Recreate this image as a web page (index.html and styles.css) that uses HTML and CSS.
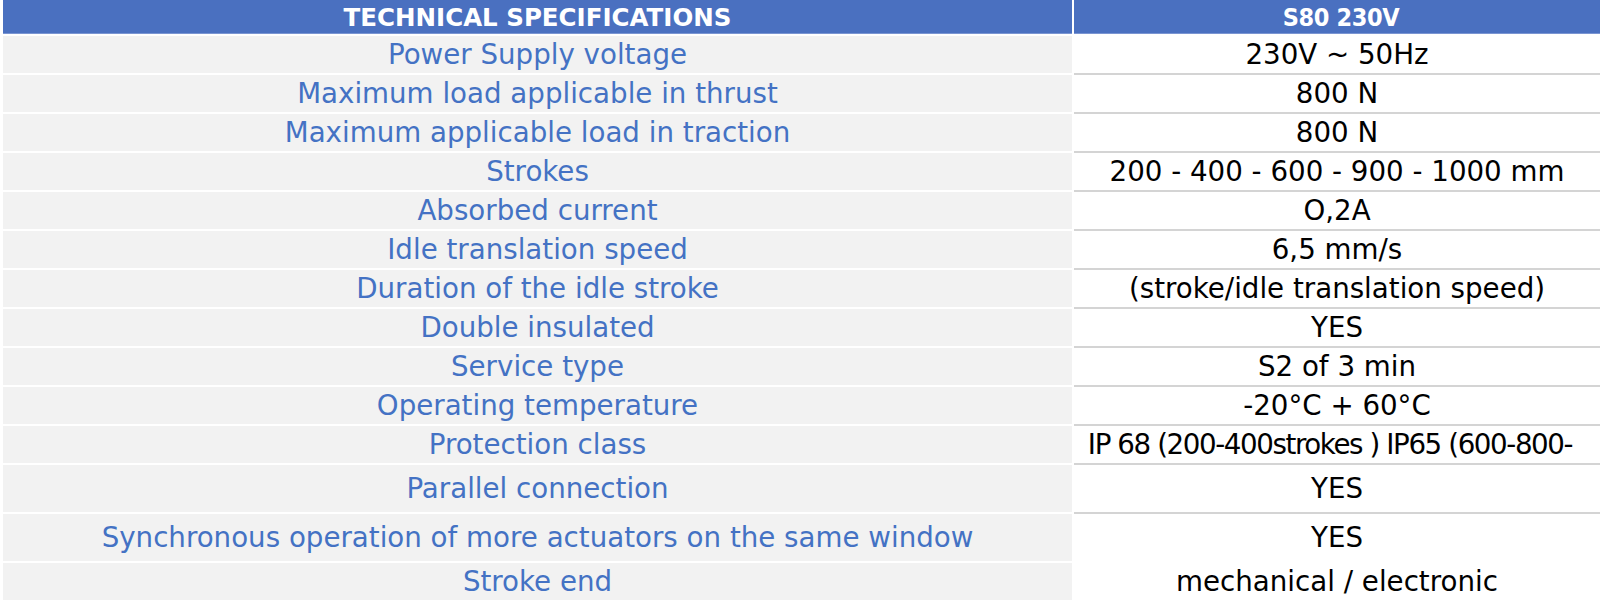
FILE: index.html
```html
<!DOCTYPE html>
<html lang="en">
<head>
<meta charset="utf-8">
<title>Technical specifications</title>
<link rel="stylesheet" href="styles.css">
</head>
<body>
<div class="spec">
  <div class="hd hd-left">TECHNICAL SPECIFICATIONS</div>
  <div class="hd hd-right">S80 230V</div>

  <div class="k">Power Supply voltage</div><div class="v">230V ~ 50Hz</div>
  <div class="k">Maximum load applicable in thrust</div><div class="v">800 N</div>
  <div class="k">Maximum applicable load in traction</div><div class="v">800 N</div>
  <div class="k">Strokes</div><div class="v">200 - 400 - 600 - 900 - 1000 mm</div>
  <div class="k">Absorbed current</div><div class="v">O,2A</div>
  <div class="k">Idle translation speed</div><div class="v">6,5 mm/s</div>
  <div class="k">Duration of the idle stroke</div><div class="v">(stroke/idle translation speed)</div>
  <div class="k">Double insulated</div><div class="v">YES</div>
  <div class="k">Service type</div><div class="v">S2 of 3 min</div>
  <div class="k">Operating temperature</div><div class="v">-20°C + 60°C</div>
  <div class="k">Protection class</div><div class="v tight">IP 68 (200-400strokes ) IP65 (600-800-</div>
  <div class="k tall">Parallel connection</div><div class="v tall">YES</div>
  <div class="k tall">Synchronous operation of more actuators on the same window</div><div class="v tall noline">YES</div>
  <div class="k">Stroke end</div><div class="v noline">mechanical / electronic</div>
</div>
</body>
</html>
```

FILE: styles.css
```css
html, body {
  margin: 0;
  padding: 0;
  background: #ffffff;
}

body {
  width: 1600px;
  height: 604px;
  overflow: hidden;
}

.spec {
  display: grid;
  grid-template-columns: 1069px 526px;
  column-gap: 2px;
  padding-left: 3px;
  font-family: "DejaVu Sans", sans-serif;
}

.hd {
  height: 34px;
  border-bottom: 2px solid #ffffff;
  background: #4a70c0;
  color: #ffffff;
  font-weight: bold;
  display: flex;
  align-items: center;
  justify-content: center;
  box-shadow: inset 0 -1px 0 #7a95d2;
}

.hd-left {
  font-family: "DejaVu Sans", sans-serif;
  font-size: 24.5px;
}

.hd-right {
  font-family: "DejaVu Sans Condensed", "DejaVu Sans", sans-serif;
  font-stretch: condensed;
  font-size: 25px;
  letter-spacing: -0.4px;
  padding-left: 8px;
}

.k, .v {
  height: 37px;
  display: flex;
  align-items: center;
  justify-content: center;
  font-size: 27.7px;
  white-space: nowrap;
  overflow: hidden;
}

.k {
  background: #f2f2f2;
  color: #4472c4;
  border-bottom: 2px solid #ffffff;
}

.v {
  background: #ffffff;
  color: #000000;
  border-bottom: 2px solid #d4d4d4;
}

.v.tight {
  letter-spacing: -1.4px;
  padding-right: 14px;
}

.v.noline {
  border-bottom-color: #ffffff;
}

.tall {
  height: 47px;
}
```
